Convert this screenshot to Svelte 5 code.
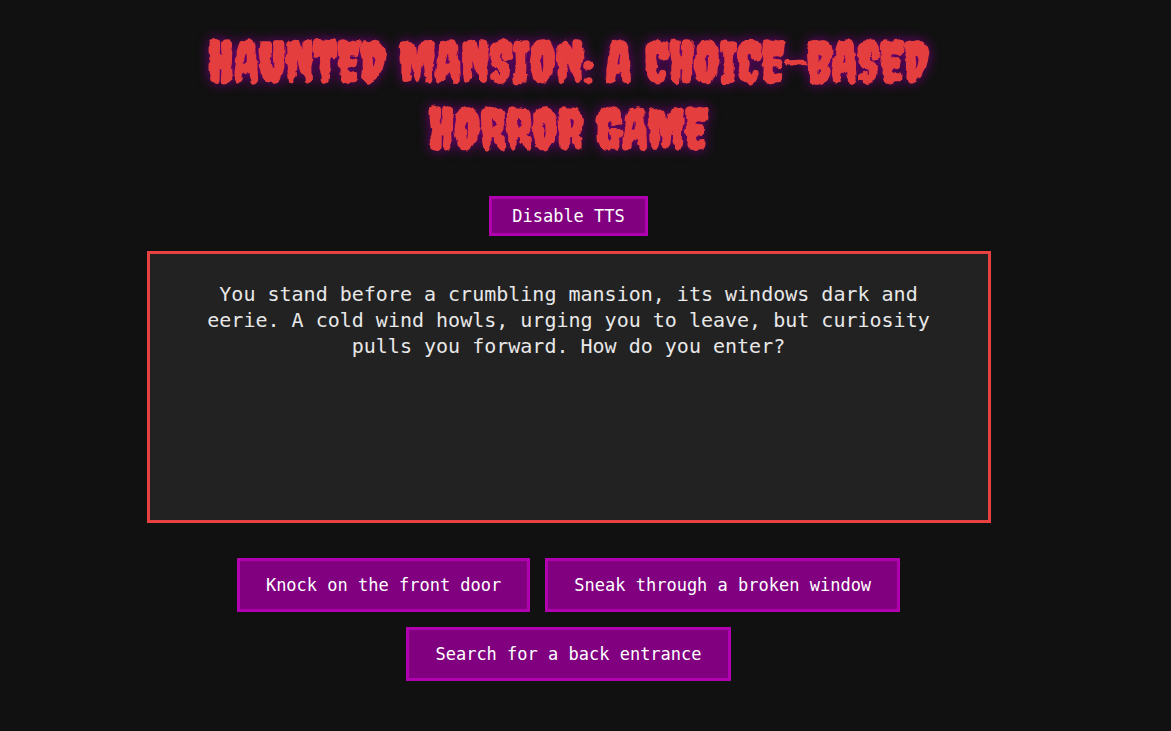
<script>
  const story =
    'You stand before a crumbling mansion, its windows dark and eerie. A cold wind howls, urging you to leave, but curiosity pulls you forward. How do you enter?';
  const choices = [
    'Knock on the front door',
    'Sneak through a broken window',
    'Search for a back entrance'
  ];
  let tts = $state(true);
</script>

<svg class="defs" width="0" height="0" aria-hidden="true">
  <filter id="ragged" x="-5%" y="-20%" width="110%" height="140%" color-interpolation-filters="sRGB">
    <feTurbulence type="fractalNoise" baseFrequency="0.11 0.09" numOctaves="1" seed="4" result="noise" />
    <feDisplacementMap in="SourceGraphic" in2="noise" scale="6" xChannelSelector="R" yChannelSelector="G" result="rough" />
    <feGaussianBlur in="rough" stdDeviation="0.4" />
  </filter>
</svg>

<main>
  <h1>Haunted Mansion: A Choice-Based Horror Game</h1>
  <button class="toggle" onclick={() => (tts = !tts)}>{tts ? 'Disable TTS' : 'Enable TTS'}</button>
  <section class="story"><p>{story}</p></section>
  <div class="choices">
    {#each choices as choice}
      <button>{choice}</button>
    {/each}
  </div>
</main>

<style>
  :global(body) {
    background: #111;
  }
  .defs {
    position: absolute;
  }
  main {
    display: flex;
    flex-direction: column;
    align-items: center;
    padding: 28px 34px 50px 0;
    color: #e8e8e8;
    font-family: 'DejaVu Sans Mono', monospace;
    text-align: center;
  }
  h1 {
    max-width: 844px;
    margin: 0 0 34px;
    color: #e53e3e;
    font-family: Creepster, 'Liberation Sans Narrow', 'Liberation Sans', sans-serif;
    font-size: 56px;
    font-weight: 700;
    line-height: 67px;
    text-transform: uppercase;
    filter: url(#ragged) drop-shadow(0 0 6px #700078);
  }
  button {
    padding: 14px 26px;
    border: 3px solid #b000b0;
    background: #800080;
    color: #fff;
    font-family: inherit;
    font-size: 17px;
    line-height: 20px;
    cursor: pointer;
  }
  .toggle {
    padding: 7px 20px;
  }
  .story {
    box-sizing: border-box;
    width: 100%;
    max-width: 844px;
    min-height: 272px;
    margin: 15px 0 35px;
    padding: 27px 40px;
    border: 3px solid #e84141;
    background: #222;
  }
  p {
    margin: 0;
    font-size: 20px;
    line-height: 26px;
  }
  .choices {
    display: flex;
    flex-wrap: wrap;
    justify-content: center;
    gap: 15px;
    max-width: 844px;
  }
</style>
